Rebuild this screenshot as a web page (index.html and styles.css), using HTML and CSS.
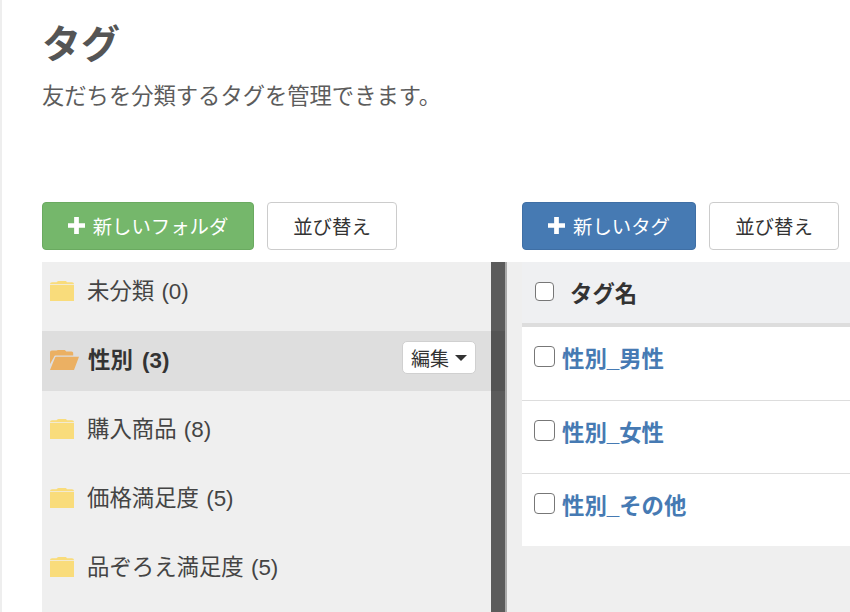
FILE: index.html
```html
<!DOCTYPE html>
<html lang="ja">
<head>
  <meta charset="UTF-8" />
  <meta name="viewport" content="width=device-width, initial-scale=1.0"/>
  <title>タグ</title>
  <link rel="stylesheet" href="styles.css">
</head>
<body>
  <svg class="defs" width="0" height="0">
    <symbol id="plus" viewBox="0 0 18 18"><path d="M6.500 0h5v6.500H18v5h-6.500V18h-5v-6.500H0v-5h6.500z"/></symbol>
    <symbol id="folder" viewBox="0 0 24 20"><path d="M0 20V3.200C0 2 .8 1.200 2 1.200h4.500C7.600 0 8.400 0 9 0h6c.9 0 1.600.5 2 1.200h5c1.200 0 2 .8 2 2V20z M0 3.200h24v.7H0z" fill-rule="evenodd"/></symbol>
    <symbol id="folder-open" viewBox="0 0 29 20"><path d="M0 14V2.500C0 1.200.8.500 2 .500h4.500C7.500 0 8.500 0 9 0h5c1 0 1.800.6 2.200 1.500h5.300c1 0 1.700.7 1.700 1.800V5.500H6c-1 0-1.700.5-2 1.400z"/><path d="M0 20 5 7.800c.3-.8.800-1.100 1.500-1.100H29L24 20z"/></symbol>
  </svg>

  <main class="page">
    <h1 class="title">タグ</h1>
    <p class="lead">友だちを分類するタグを管理できます。</p>

    <div class="columns">
      <section class="col col-folders">
        <div class="toolbar">
          <button class="btn btn-green"><svg class="plus"><use href="#plus"/></svg>新しいフォルダ</button>
          <button class="btn">並び替え</button>
        </div>
        <div class="folders">
          <ul class="folder-list">
            <li class="folder"><svg class="ico"><use href="#folder"/></svg>未分類 (0)</li>
            <li class="folder active"><svg class="ico-open"><use href="#folder-open"/></svg>性別 (3)
              <button class="edit">編集<span class="caret"></span></button>
            </li>
            <li class="folder"><svg class="ico"><use href="#folder"/></svg>購入商品 (8)</li>
            <li class="folder"><svg class="ico"><use href="#folder"/></svg>価格満足度 (5)</li>
            <li class="folder"><svg class="ico"><use href="#folder"/></svg>品ぞろえ満足度 (5)</li>
          </ul>
          <div class="scrollbar"></div>
        </div>
      </section>

      <section class="col col-tags">
        <div class="toolbar">
          <button class="btn btn-blue"><svg class="plus"><use href="#plus"/></svg>新しいタグ</button>
          <button class="btn">並び替え</button>
        </div>
        <div class="tags">
          <div class="tag-head"><input type="checkbox" class="check"><span>タグ名</span></div>
          <div class="tag-row"><input type="checkbox" class="check"><a href="#">性別_男性</a></div>
          <div class="tag-row"><input type="checkbox" class="check"><a href="#">性別_女性</a></div>
          <div class="tag-row"><input type="checkbox" class="check"><a href="#">性別_その他</a></div>
        </div>
      </section>
    </div>
  </main>
</body>
</html>
```

FILE: styles.css
```css
html, body {
  height: 100%;
}
body {
  margin: 0;
  overflow: hidden;
  background: #fff;
  color: #333;
  font-family: "Liberation Sans", "Noto Sans CJK JP", sans-serif;
  border-left: 2px solid #eee;
  box-sizing: border-box;
}
.defs {
  position: absolute;
}
.page {
  height: 100%;
  padding-left: 40px;
  display: flex;
  flex-direction: column;
}
.title {
  margin: 21px 0 0;
  font-size: 39px;
  line-height: 48px;
  font-weight: bold;
  color: #555;
}
.lead {
  margin: 12px 0 0;
  font-size: 22.300px;
  line-height: 32px;
  color: #5c5c5c;
}
.columns {
  margin-top: 89px;
  flex: 1;
  display: flex;
  min-height: 0;
}
.col {
  display: flex;
  flex-direction: column;
}
.col-folders {
  width: 465px;
}
.col-tags {
  flex: 1;
  min-width: 0;
}
.toolbar {
  display: flex;
  gap: 13px;
  height: 48px;
  margin-bottom: 12px;
}
.col-tags .toolbar {
  padding-left: 15px;
}
.btn {
  height: 48px;
  width: 130px;
  padding: 0 0 2px;
  border: 1px solid #ccc;
  border-radius: 4px;
  background: #fff;
  color: #333;
  font: inherit;
  font-size: 19.400px;
  display: flex;
  align-items: center;
  justify-content: center;
}
.btn-green {
  width: 212px;
  background: #75b76b;
  border-color: #6aaa60;
  color: #fff;
}
.btn-blue {
  width: 174px;
  background: #467ab3;
  border-color: #3f6fa5;
  color: #fff;
}
.plus {
  width: 17px;
  height: 17px;
  margin-right: 8px;
  fill: #fff;
}
.folders {
  position: relative;
  flex: 1;
  background: #efefef;
  border-right: 2px solid #aaa;
  overflow: hidden;
}
.scrollbar {
  position: absolute;
  top: 0;
  bottom: 0;
  right: 0;
  width: 14px;
  background: rgba(0, 0, 0, .62);
}
.folder-list {
  list-style: none;
  margin: 0;
  padding: 0;
}
.folder {
  height: 60px;
  box-sizing: border-box;
  margin-bottom: 9px;
  display: flex;
  align-items: center;
  padding: 0 0 6px 8px;
  font-size: 22.400px;
  word-spacing: 1px;
  color: #444;
}
.ico {
  width: 24px;
  height: 20px;
  margin: 4px 13px 0 0;
  fill: #f9dc7b;
}
.ico-open {
  width: 29px;
  height: 20px;
  margin: 4px 9px 0 0;
  fill: #ebb063;
}
.active {
  background: #dedede;
  font-weight: bold;
  word-spacing: 3px;
  color: #333;
  position: relative;
}
.edit {
  position: absolute;
  top: 10px;
  left: 360px;
  width: 74px;
  height: 33px;
  padding: 0;
  border: 1px solid #d0d0d0;
  border-radius: 5px;
  background: #fff;
  color: #333;
  font: inherit;
  font-weight: normal;
  font-size: 19px;
  display: flex;
  align-items: center;
  justify-content: center;
}
.caret {
  margin-left: 6px;
  border-top: 6px solid #333;
  border-left: 6px solid transparent;
  border-right: 6px solid transparent;
}
.tags {
  flex: 1;
  background: #efefef;
  padding-left: 15px;
}
.tag-head {
  height: 59px;
  border-bottom: 4px solid #ddd;
  background: #eff0f2;
  display: flex;
  align-items: center;
  padding: 0 0 2px 13px;
  font-size: 22.400px;
  font-weight: bold;
  color: #333;
}
.tag-head span {
  margin-left: 16px;
}
.tag-head .check {
  width: 19px;
  height: 19px;
}
.tag-row {
  height: 73px;
  background: #fff;
  display: flex;
  align-items: flex-start;
  padding: 19px 0 0 12px;
  box-sizing: border-box;
  font-size: 22.400px;
  font-weight: bold;
}
.tag-row + .tag-row {
  border-top: 1px solid #ddd;
}
.tag-row a {
  margin: -1px 0 0 7px;
  color: #467ab3;
  text-decoration: none;
  line-height: 30px;
}
.check {
  appearance: none;
  flex: none;
  width: 21px;
  height: 21px;
  margin: 0;
  border: 1.500px solid #777;
  border-radius: 4px;
  background: #fff;
  box-sizing: border-box;
}
```
